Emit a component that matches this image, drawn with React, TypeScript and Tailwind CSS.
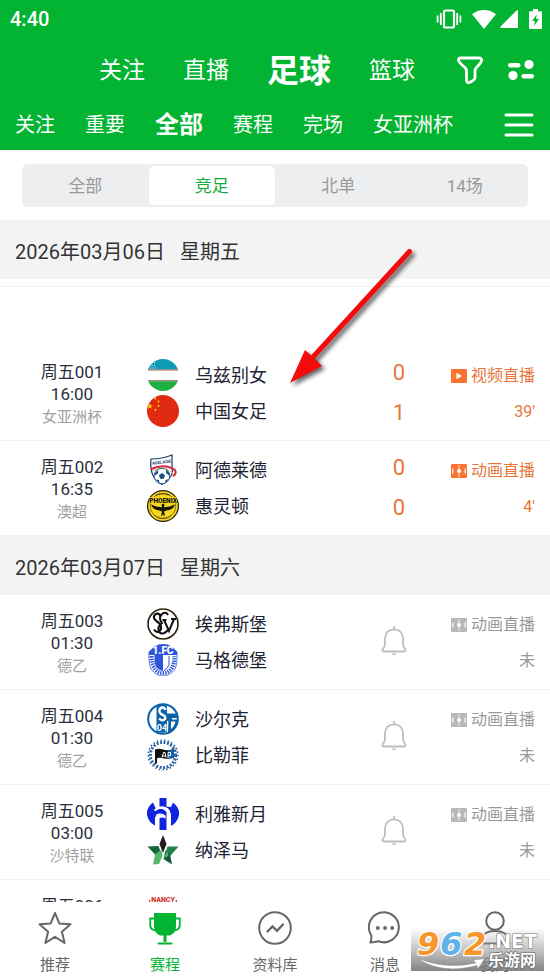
import React, { useState } from "react";
import clsx from "clsx";

const fontStack = "font-[Roboto,'Noto_Sans_CJK_SC',sans-serif]";

const sportTabs = ["关注", "直播", "足球", "篮球"];
const filterTabs = ["关注", "重要", "全部", "赛程", "完场", "女亚洲杯"];
const lotteryTabs = ["全部", "竞足", "北单", "14场"];

/* ---------- status bar ---------- */

const StatusBar = () => (
  <div className="flex h-[38px] items-center justify-between pl-2.5 pr-2">
    <span className="text-[20px] font-medium leading-6">4:40</span>
    <div className="flex items-center">
      <svg width="26" height="20" viewBox="0 0 26 20" fill="none" stroke="currentColor" className="mr-2.5">
        <rect x="8" y="1.5" width="10" height="17" rx="1.5" strokeWidth="2.2" />
        <path d="M4.8 4v12M21.2 4v12M1.6 6.5v7M24.4 6.5v7" strokeWidth="1.8" />
      </svg>
      <svg width="24" height="19" viewBox="0 0 24 19" fill="currentColor" className="mr-1">
        <path d="M0 4.2C3.4 1.5 7.5 0 12 0s8.600 1.500 12 4.200L12 19z" />
      </svg>
      <svg width="18" height="18" viewBox="0 0 18 18" fill="currentColor" className="mr-[11px]">
        <path d="M17 0Q18 0 18 1v17H1Q-.5 18 .6 16.600z" />
      </svg>
      <svg width="13" height="20" viewBox="0 0 13 20">
        <path d="M4 0h5v2.200h3q1 0 1 1V19q0 1-1 1H1q-1 0-1-1V3.200q0-1 1-1h3z" fill="currentColor" />
        <path d="M7.600 5.500L3.200 12h2.700l-.6 5L9.900 10H7.100z" fill="#03b432" />
      </svg>
    </div>
  </div>
);

/* ---------- club crests ---------- */

const Uzbekistan = () => (
  <svg viewBox="0 0 32 32" className="size-8">
    <clipPath id="uz">
      <circle cx="16" cy="16" r="16" />
    </clipPath>
    <g clipPath="url(#uz)">
      <path fill="#fff" d="M0 0h32v32H0z" />
      <path fill="#0d9bb8" d="M0 0h32v10.500H0z" />
      <path fill="#a35a50" d="M0 10.500h32v1H0zM0 21.300h32v1H0z" />
      <path fill="#1fb141" d="M0 22.300h32V32H0z" />
      <path stroke="#fff" strokeWidth="1" strokeDasharray="1 1.600" d="M7 4h1M4.500 6.500H8M3 9h6" />
    </g>
  </svg>
);

const China = () => (
  <svg viewBox="0 0 32 32" className="size-8">
    <circle cx="16" cy="16" r="16" fill="#e02a12" />
    <g fill="#fbd60a">
      <path d="M2.800 8l.7 2.200h2.300L4 11.600l.7 2.200-1.900-1.300-1.800 1.300.6-2.200L.5 10.200h1.700z" />
      <circle cx="8.300" cy="3.500" r="1" />
      <circle cx="11.500" cy="6.500" r="1" />
      <circle cx="11.500" cy="11" r="1" />
      <circle cx="8.300" cy="14.800" r="1" />
    </g>
  </svg>
);

const Adelaide = () => (
  <svg viewBox="0 0 32 32" className="size-8">
    <path d="M4 5Q15 5 25 1V13Q28 22 15 30.500Q2 24 4 5z" fill="#fff" stroke="#173f6b" strokeWidth="1.200" />
    <text x="5.200" y="10.800" fontSize="4.200" fontWeight="700" fill="#173f6b" transform="rotate(-7 5 10)">ADELAIDE</text>
    <path d="M4 15Q18 9 28 16Q30 20 26 22" fill="none" stroke="#d8233c" strokeWidth="2" />
    <path d="M5 17Q17 12 25 18Q27 20 25 22" fill="none" stroke="#e3b45f" strokeWidth="1" />
    <circle cx="15" cy="22" r="7.800" fill="#fff" stroke="#1d4f87" strokeWidth=".9" />
    <path fill="#1d4f87" d="M15 19l3 2.200-1.100 3.600h-3.800L12 21.200zM8 19l3-3v3.500l-2.800 2zM19 15.500l3.500 3.500-.5 2.500-3-2.500zM8.500 25.500l3.500.5.500 3.300zM18 29.500l.5-3.500 3.500-1z" />
  </svg>
);

const Phoenix = () => (
  <svg viewBox="0 0 32 32" className="size-8">
    <circle cx="16" cy="16" r="15.400" fill="#f6d61f" stroke="#26230f" strokeWidth="1.200" />
    <circle cx="16" cy="16" r="12.800" fill="none" stroke="#26230f" strokeWidth=".5" />
    <path d="M2.500 7h27v6.500h-27z" fill="#f6d61f" />
    <text x="16" y="12.800" fontSize="6.500" fontWeight="900" textAnchor="middle" fill="#17150a">PHOENIX</text>
    <path d="M9 5.300Q16 2.500 23 5.300" stroke="#26230f" strokeWidth="1.200" strokeDasharray="1 .6" fill="none" />
    <path fill="#17150a" d="M16 13.500l1.500 1.200-.5 2.600Q23 17 28 14.500Q26 20 19.500 20.500L17 21.500l1 5-2-2-2 2 1-5-2.500-1Q6 20 4 14.500Q9 17 15 17.300l-.5-2.600z" />
    <path d="M8 25.500Q16 31 24 25.500" stroke="#26230f" strokeWidth="1" strokeDasharray="1.200 .8" fill="none" />
  </svg>
);

const Elversberg = () => (
  <svg viewBox="0 0 32 32" className="size-8">
    <circle cx="16" cy="16" r="15" fill="#fff" stroke="#15120c" strokeWidth="1.600" />
    <circle cx="16" cy="16" r="15.800" fill="none" stroke="#bd9a55" strokeWidth=".4" />
    <g fill="none" stroke="#111">
      <path d="M14 8Q11 4 8 6.500Q5 10 10 13.500Q15.500 17 13.500 22Q10 26 7 21.500" strokeWidth="2.200" />
      <path d="M21 7Q19 3 15 6Q11 10 15 15Q10 18 12 24Q16 28 21 22" strokeWidth="2" />
      <path d="M17 12l5 11 5-12M15.500 12h4M24 11h5" strokeWidth="2" />
    </g>
  </svg>
);

const Magdeburg = () => (
  <svg viewBox="0 0 32 32" className="size-8">
    <path d="M7 3Q16-2.500 25 3L30 8Q30.500 20 28 25Q23 32 16 32Q9 32 4 25Q1.500 20 2 8z" fill="#fff" stroke="#3357d8" strokeWidth=".8" />
    <path d="M7 3Q16-2.500 25 3L30 8v3H2V8zM7.500 11H16v16q-7-1-8.500-9z" fill="#2f55dc" />
    <path d="M4.500 12Q5 21 8 25Q11 29 16 29Q21 29 24.500 24.500Q27.500 20 27.500 12" fill="none" stroke="#2f55dc" strokeWidth="4" strokeDasharray="1.400 1.100" />
    <path d="M22 12v9q-2 4-5 5.500" fill="none" stroke="#2f55dc" strokeWidth="1" />
    <text x="16" y="10" fontSize="10" fontWeight="900" textAnchor="middle" fill="#fff">1.FC</text>
  </svg>
);

const Schalke = () => (
  <svg viewBox="0 0 32 32" className="size-8">
    <circle cx="16" cy="16" r="14.800" fill="#fff" stroke="#0b62a8" strokeWidth="2" />
    <path d="M20 10.500h10.500v4.500H25v3h-5z" fill="#0b62a8" />
    <path d="M9.500 3.500Q16 0 20 3v25.500q-6 2.500-10.500 0z" fill="#0b62a8" />
    <path d="M21.500 16.500h9Q30 25 23 29h-2z" fill="#0b62a8" />
    <path d="M24 18.500h4.500Q27 24 24 26z" fill="#fff" />
    <path d="M18.500 7Q18 4 15 4.500Q12 5.500 12.500 9Q13 11 16 12Q19 13.500 18 16Q15.500 19 12 15.500" fill="none" stroke="#fff" strokeWidth="2.400" />
    <text x="15" y="28" fontSize="9" fontWeight="700" textAnchor="middle" fill="#fff">04</text>
  </svg>
);

const Bielefeld = () => (
  <svg viewBox="0 0 32 32" className="size-8">
    <circle cx="16" cy="16" r="12.600" fill="none" stroke="#2b64a4" strokeWidth="3" strokeDasharray="2 1.500" />
    <circle cx="16" cy="16" r="14.800" fill="none" stroke="#2b64a4" strokeWidth="1.600" strokeDasharray="1.500 2.200" />
    <circle cx="16" cy="16" r="10.800" fill="#fff" />
    <path d="M8 10.500q4-1.500 8 0 5 1.500 11-.5v9q-6 1.500-10.500.3-4-1-6.500 0v5L8 25z" fill="#111" />
    <path d="M21 11.500l6-1v8l-6 1z" fill="#1263b0" />
    <path d="M15 18.500l1.500-5H18l1 5M16 17h3M21 19v-5.500h2.500v3H21" fill="none" stroke="#fff" strokeWidth="1" />
  </svg>
);

const AlHilal = () => (
  <svg viewBox="0 0 32 32" className="size-8">
    <g fill="#0f25dd">
      <path d="M12.500 0h7v9.500h-7zM12.500 20q4-1.500 7 1V32h-7z" />
      <path d="M6 4.500Q-1.500 10.500.3 18Q2 24.500 8 27.500V19Q12 14.500 18 18L19.500 22V14Q15 8.500 9.500 12z" />
      <path d="M26 4.500Q33.500 10.500 31.700 18Q30 25 24 28V20Q24.500 11.500 17.500 8.500L24 9z" />
    </g>
    <path d="M7.500 12.500Q14 7 20.500 11.500Q23 14 22.500 20" fill="none" stroke="#fff" strokeWidth="2.200" />
    <path d="M9 17.500Q14 14.500 18.500 18.500" fill="none" stroke="#fff" strokeWidth="1.200" />
  </svg>
);

const Najma = () => (
  <svg viewBox="0 0 32 32" className="size-8">
    <path d="M.5 12.500l11-.5 3 8.500-6 .5z" fill="#14653a" />
    <path d="M31.500 12.500H20.500l-2.300 7 5 2.500z" fill="#1f8048" />
    <path d="M8 20.500l6.500-5 1 6.500-3.500 8-6 .5z" fill="#53b86f" />
    <path d="M23 20l-4.500-3.500L16.500 25l8.500 5.500z" fill="#185c37" />
    <path d="M17 24l3-7 1.500 5z" fill="#53b86f" />
    <path d="M16 1l3.500 9L16 19l-3.500-9z" fill="#201c1f" />
  </svg>
);

const Nancy = () => (
  <svg viewBox="0 0 32 32" className="size-8">
    <text x="16" y="9" fontSize="7" fontWeight="900" textAnchor="middle" fill="#d3382c">NANCY</text>
    <path d="M3 7l-1 3M29 7l1 3" stroke="#d3382c" strokeWidth="1.200" />
    <circle cx="16" cy="22" r="9" fill="#d3382c" />
  </svg>
);

/* ---------- match list ---------- */

type Team = { name: string; crest: React.FC; score?: number };

type Match = {
  code: string;
  time: string;
  league: string;
  teams: Team[];
  media?: string;
  video?: boolean;
  status?: string;
  live?: boolean;
};

const friday: Match[] = [
  {
    code: "周五001",
    time: "16:00",
    league: "女亚洲杯",
    teams: [
      { name: "乌兹别女", crest: Uzbekistan, score: 0 },
      { name: "中国女足", crest: China, score: 1 },
    ],
    media: "视频直播",
    video: true,
    status: "39'",
    live: true,
  },
  {
    code: "周五002",
    time: "16:35",
    league: "澳超",
    teams: [
      { name: "阿德莱德", crest: Adelaide, score: 0 },
      { name: "惠灵顿", crest: Phoenix, score: 0 },
    ],
    media: "动画直播",
    status: "4'",
    live: true,
  },
];

const saturday: Match[] = [
  {
    code: "周五003",
    time: "01:30",
    league: "德乙",
    teams: [
      { name: "埃弗斯堡", crest: Elversberg },
      { name: "马格德堡", crest: Magdeburg },
    ],
    media: "动画直播",
    status: "未",
  },
  {
    code: "周五004",
    time: "01:30",
    league: "德乙",
    teams: [
      { name: "沙尔克", crest: Schalke },
      { name: "比勒菲", crest: Bielefeld },
    ],
    media: "动画直播",
    status: "未",
  },
  {
    code: "周五005",
    time: "03:00",
    league: "沙特联",
    teams: [
      { name: "利雅新月", crest: AlHilal },
      { name: "纳泽马", crest: Najma },
    ],
    media: "动画直播",
    status: "未",
  },
  {
    code: "周五006",
    time: "",
    league: "",
    teams: [{ name: "", crest: Nancy }],
  },
];

const MediaIcon = ({ video }: { video?: boolean }) => (
  <svg width="16" height="14" viewBox="0 0 16 14">
    <rect width="16" height="14" rx="1" fill="currentColor" />
    {video ? (
      <path d="M5.500 3.800v6.400L11 7z" fill="#fff" />
    ) : (
      <g stroke="#fff" fill="none">
        <path d="M8 1v12" strokeWidth=".8" />
        <path d="M1.800 4.500v5M14.200 4.500v5" strokeWidth="1.200" />
        <circle cx="8" cy="7" r="2" fill="#fff" stroke="none" />
      </g>
    )}
  </svg>
);

const BellIcon = () => (
  <svg width="26" height="30" viewBox="0 0 26 30" fill="none" stroke="#bdbdbd" strokeWidth="1.800">
    <path d="M13 .8v2.500" strokeLinecap="round" />
    <path d="M13 3.300C7.500 3.300 4 7.200 4 12.500v6c0 2.600-2.600 4-2.600 5.800 0 .8.600 1.200 1.400 1.200h20.400c.8 0 1.400-.4 1.400-1.200 0-1.800-2.600-3.200-2.600-5.800v-6c0-5.300-3.500-9.200-9-9.200z" />
    <path d="M10.500 27.500h5q-1 1.800-2.500 1.800t-2.500-1.800z" fill="#bdbdbd" stroke="none" />
  </svg>
);

const MatchRow = ({ match }: { match: Match }) => (
  <li className="flex h-[95px] items-start border-b border-[#f0f0f0] pt-[13px]">
    <div className="flex w-36 flex-col items-center pt-0.5 text-[17px] leading-[22px] text-[#2a2f3c]">
      <span>{match.code}</span>
      <span>{match.time}</span>
      <span className="text-[15px] leading-6 text-[#a0a0a0]">{match.league}</span>
    </div>
    <div className="flex flex-1 flex-col gap-1 pl-[3px]">
      {match.teams.map((team) => (
        <div key={team.name} className="flex h-8 items-center gap-4">
          <team.crest />
          <span className="pt-0.5 text-[18px] leading-6 text-[#1d2333]">{team.name}</span>
        </div>
      ))}
    </div>
    {match.live && (
      <div className="flex w-[38px] flex-col items-center gap-4 pt-0.5 text-[22px] leading-6 text-[#ea753c]">
        {match.teams.map((team) => (
          <span key={team.name}>{team.score}</span>
        ))}
      </div>
    )}
    {!match.live && match.media && (
      <div className="w-[38px] pt-[18px]">
        <button type="button" aria-label="提醒" className="ml-px block">
          <BellIcon />
        </button>
      </div>
    )}
    {match.media && (
      <div
        className={clsx(
          "flex w-[132px] flex-col items-end gap-3 pr-[15px] pt-[5px] text-[16px] leading-6",
          match.live ? "text-[#ea753c]" : "text-[#999]"
        )}
      >
        <a href="#live" className="flex items-center gap-1">
          <span className={match.live ? "text-[#fb7330]" : "text-[#b8b8b8]"}>
            <MediaIcon video={match.video} />
          </span>
          {match.media}
        </a>
        <span>{match.status}</span>
      </div>
    )}
  </li>
);

const DateHeader = ({ date, weekday }: { date: string; weekday: string }) => (
  <h2 className="flex h-[59px] items-center gap-[15px] bg-[#f3f3f3] px-[15px] pt-1 text-[20px] leading-7 text-[#333]">
    <span>{date}</span>
    <span>{weekday}</span>
  </h2>
);

/* ---------- bottom navigation ---------- */

const bottomTabs = [
  {
    label: "推荐",
    icon: (
      <path d="M17 2l4.300 10.400 11.200.9-8.600 7.400 2.700 11.300-9.600-6.100L7.400 32l2.700-11.300-8.600-7.400 11.200-.9z" strokeLinejoin="round" />
    ),
  },
  {
    label: "赛程",
    icon: (
      <>
        <path d="M6 2h22v13q0 7-6 9.500h-3.500V31h-3v-6.500H12Q6 22 6 15z" fill="currentColor" stroke="none" />
        <path d="M6.500 7.500H2.200V14q0 5 6 5.500M27.500 7.500h4.300V14q0 5-6 5.500" strokeWidth="1.800" />
        <path d="M10.500 32.500h13" strokeLinecap="round" />
      </>
    ),
  },
  {
    label: "资料库",
    icon: (
      <>
        <circle cx="17" cy="17" r="15.800" />
        <path d="M9.500 20.500l5-5 4.500 4.300 6-6.300" strokeWidth="2.400" strokeLinecap="round" />
      </>
    ),
  },
  {
    label: "消息",
    icon: (
      <>
        <path d="M3.300 24.500A15 15 0 1 1 10.500 30.300Q7 31 2.300 31.500Q3.800 28 3.300 24.500z" strokeLinejoin="round" />
        <g fill="currentColor" stroke="none">
          <circle cx="9.800" cy="17" r="1.900" />
          <circle cx="17" cy="17" r="1.900" />
          <circle cx="24.200" cy="17" r="1.900" />
        </g>
      </>
    ),
  },
  {
    label: "我的",
    icon: (
      <>
        <circle cx="17" cy="10" r="8.800" />
        <path d="M2.500 32.500Q3 20 17 20T31.500 32.500z" />
      </>
    ),
  },
];

const Watermark = () => (
  <div className="pointer-events-none absolute bottom-1.5 right-1.5 h-[43px] w-[133px] bg-gradient-to-b from-transparent via-[#99999990] to-[#777777e8]">
    <svg viewBox="0 0 133 43" className="h-full w-full">
      <path d="M6 30Q34 42 65 35l-3-3 12-1.500-7 10-1-3Q30 47 6 30z" fill="#fff" stroke="#888" strokeWidth=".5" />
      <g fontFamily="DejaVu Sans, sans-serif" fontWeight="700" strokeLinejoin="round" paintOrder="stroke">
        <g fontSize="32" fontStyle="italic" stroke="#fff" strokeWidth="2.500">
          <text x="6" y="27" fill="#f7962b">9</text>
          <text x="29" y="27" fill="#5db2ea">6</text>
          <text x="53" y="27" fill="#f7962b">2</text>
        </g>
        <text x="77" y="20" fontSize="19" fill="#fff" stroke="#777" strokeWidth="1.200">.NET</text>
      </g>
      <text x="77" y="38" fontSize="16" fontWeight="700" fill="#fff" stroke="#666" strokeWidth="1.200" paintOrder="stroke">乐游网</text>
    </svg>
  </div>
);

const BottomNav = () => (
  <nav className="relative shrink-0 bg-white">
    <ul className="flex h-[75px]">
      {bottomTabs.map((tab) => (
        <li key={tab.label} className="flex-1">
          <a
            href="#tab"
            className={clsx(
              "flex flex-col items-center gap-2 pt-[9px] text-[15px] leading-6",
              tab.label === "赛程" ? "text-[#03b432]" : "text-[#666]"
            )}
          >
            <svg width="34" height="34" viewBox="0 0 34 34" fill="none" stroke="currentColor" strokeWidth="2">
              {tab.icon}
            </svg>
            {tab.label}
          </a>
        </li>
      ))}
    </ul>
    <Watermark />
  </nav>
);

/* red pointer drawn over the list */
const Pointer = () => (
  <svg
    width="136"
    height="150"
    viewBox="0 0 136 150"
    className="pointer-events-none absolute left-[284px] top-[244px] drop-shadow-[3px_3px_2px_rgba(0,0,0,0.6)]"
  >
    <path d="M125.500 7.500L29 113" stroke="#f40b0b" strokeWidth="5" strokeLinecap="round" />
    <path d="M6 139l15-33 7 6 10 10z" fill="#f40b0b" />
  </svg>
);

const App = () => {
  const [sport, setSport] = useState("足球");
  const [filter, setFilter] = useState("全部");
  const [lottery, setLottery] = useState("竞足");

  return (
    <div lang="zh-CN" className={clsx("relative flex h-screen flex-col overflow-hidden bg-white", fontStack)}>
      <header className="h-[150px] shrink-0 bg-[#03b432] text-white">
        <StatusBar />
        <div className="flex h-16 items-center justify-between pl-[99px] pr-4">
          <div className="flex items-center gap-[38px] pt-0.5">
            {sportTabs.map((tab) => (
              <button
                key={tab}
                type="button"
                onClick={() => setSport(tab)}
                className={clsx("leading-10", sport === tab ? "text-[32px] font-bold" : "text-[23px]")}
              >
                {tab}
              </button>
            ))}
          </div>
          <div className="flex items-center gap-[25px]">
            <button type="button" aria-label="筛选">
              <svg width="26" height="28" viewBox="0 0 26 28" fill="none" stroke="currentColor" strokeWidth="2.800" strokeLinejoin="round">
                <path d="M4 2h18q3 0 2.500 2.500Q24 7 19.500 11.500 18 13 18 15v6.500q0 2-2 3l-3 1.700q-3 1.300-3.500-1.700V15q0-2-1.500-3.500Q2.500 7 1.500 4.500 1 2 4 2z" />
              </svg>
            </button>
            <button type="button" aria-label="更多">
              <svg width="26" height="22" viewBox="0 0 26 22" fill="currentColor">
                <rect x="0" y="4" width="12.500" height="4.500" rx="2.200" />
                <circle cx="21" cy="5.500" r="4.600" />
                <circle cx="5" cy="16.500" r="4.600" />
                <rect x="13.500" y="15" width="12.500" height="4.500" rx="2.200" />
              </svg>
            </button>
          </div>
        </div>
        <div className="flex h-[46px] items-center justify-between pl-[15px] pr-4">
          <div className="flex items-center gap-[30px]">
            {filterTabs.map((tab) => (
              <button
                key={tab}
                type="button"
                onClick={() => setFilter(tab)}
                className={clsx("leading-8", filter === tab ? "text-[24px] font-bold" : "text-[20px]")}
              >
                {tab}
              </button>
            ))}
          </div>
          <button type="button" aria-label="菜单">
            <svg width="30" height="24" viewBox="0 0 30 24" stroke="currentColor" strokeWidth="3" strokeLinecap="round">
              <path d="M2 2h26M2 12h26M2 22h26" />
            </svg>
          </button>
        </div>
      </header>

      <main className="min-h-0 flex-1 overflow-hidden">
        <div className="px-[22px] pb-[13px] pt-3.5">
          <div className="flex h-[43px] rounded-md bg-[#edeeef] py-0.5">
            {lotteryTabs.map((tab) => (
              <button
                key={tab}
                type="button"
                onClick={() => setLottery(tab)}
                className={clsx(
                  "flex-1 rounded-[5px] pt-0.5 text-[17px]",
                  lottery === tab ? "bg-white text-[#14aa3c]" : "text-[#999]"
                )}
              >
                {tab}
              </button>
            ))}
          </div>
        </div>

        <DateHeader date="2026年03月06日" weekday="星期五" />
        <div className="h-[67px] pt-[7px]">
          <hr className="border-[#f0f0f0]" />
        </div>
        <ul>
          {friday.map((match) => (
            <MatchRow key={match.code} match={match} />
          ))}
        </ul>

        <DateHeader date="2026年03月07日" weekday="星期六" />
        <ul>
          {saturday.map((match) => (
            <MatchRow key={match.code} match={match} />
          ))}
        </ul>
      </main>

      <BottomNav />
      <Pointer />
    </div>
  );
};

export default App;
